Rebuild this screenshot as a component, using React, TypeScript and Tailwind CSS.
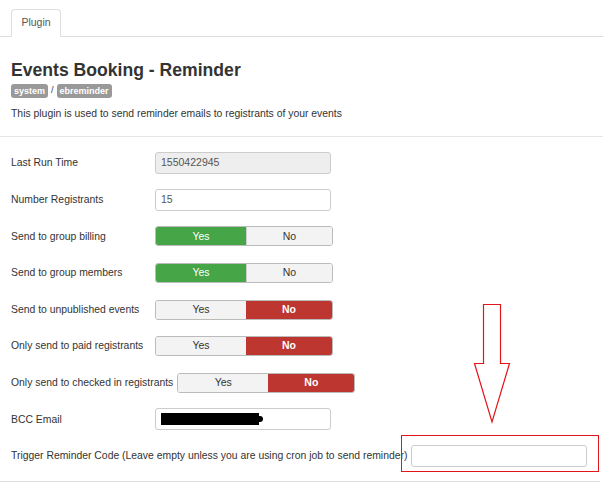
import React from "react";

type Row =
  | { label: string; kind: "input"; value?: string; disabled?: boolean; redacted?: boolean }
  | { label: string; kind: "toggle"; yes: boolean };

const rows: Row[] = [
  { label: "Last Run Time", kind: "input", value: "1550422945", disabled: true },
  { label: "Number Registrants", kind: "input", value: "15" },
  { label: "Send to group billing", kind: "toggle", yes: true },
  { label: "Send to group members", kind: "toggle", yes: true },
  { label: "Send to unpublished events", kind: "toggle", yes: false },
  { label: "Only send to paid registrants", kind: "toggle", yes: false },
  { label: "Only send to checked in registrants", kind: "toggle", yes: false },
  { label: "BCC Email", kind: "input", redacted: true },
];

function Toggle({ yes }: { yes: boolean }) {
  return (
    <div className="flex h-[20px] w-[178px] overflow-hidden rounded-[3px] border border-[#bbb] text-[10.5px]">
      <div
        className={
          yes
            ? "flex w-[90px] items-center justify-center bg-[#46a546] text-white"
            : "flex w-[90px] items-center justify-center bg-[#f3f3f3] text-[#333]"
        }
      >
        Yes
      </div>
      <div
        className={
          yes
            ? "flex flex-1 items-center justify-center border-l border-[#ccc] bg-[#f3f3f3] text-[#333]"
            : "flex flex-1 items-center justify-center bg-[#bd362f] font-bold text-white"
        }
      >
        No
      </div>
    </div>
  );
}

function TextInput({ value, disabled, redacted }: { value?: string; disabled?: boolean; redacted?: boolean }) {
  return (
    <div
      className={
        "flex h-[22px] w-[176px] items-center rounded-[3px] border border-[#ccc] px-[5px] text-[10.5px] text-[#555] " +
        (disabled ? "bg-[#eee]" : "bg-white")
      }
    >
      {redacted ? (
        <div className="flex items-center">
          <div className="h-[12px] w-[98px] bg-black" />
          <div className="h-[6px] w-[4px] rounded-r-full bg-black" />
        </div>
      ) : (
        value
      )}
    </div>
  );
}

export default function App() {
  return (
    <div className="relative h-[483px] w-[603px] overflow-hidden bg-white font-['Liberation_Sans',Arial,sans-serif] text-[#333]">
      <div className="mt-[9px] flex border-b border-[#ddd] pl-[11px]">
        <div className="-mb-px flex h-[28px] w-[50px] items-center justify-center rounded-t-[4px] border border-b-white border-[#ddd] bg-white text-[10.5px] text-[#555]">
          Plugin
        </div>
      </div>

      <div className="px-[11px]">
        <h1 className="mt-[22px] text-[17.6px] leading-[22px] font-bold text-[#333]">Events Booking - Reminder</h1>
        <div className="mt-[3px] flex items-center gap-[3px] text-[9px]">
          <span className="rounded-[3px] bg-[#999] px-[3px] leading-[14px] font-bold text-white">system</span>
          <span className="text-[#333]">/</span>
          <span className="rounded-[3px] bg-[#999] px-[3px] leading-[14px] font-bold text-white">ebreminder</span>
        </div>
        <p className="mt-[9px] text-[10.4px] leading-[14px]">This plugin is used to send reminder emails to registrants of your events</p>
      </div>

      <div className="mt-[15px] border-t border-[#e5e5e5]" />

      <div className="mt-[8px] flex flex-col px-[11px]">
        {rows.map((row) => (
          <div key={row.label} className="flex h-[36.6px] items-center">
            <div className="mr-[4px] min-w-[140px] whitespace-nowrap text-[10.4px]">{row.label}</div>
            {row.kind === "toggle" ? (
              <Toggle yes={row.yes} />
            ) : (
              <TextInput value={row.value} disabled={row.disabled} redacted={row.redacted} />
            )}
          </div>
        ))}
        <div className="flex h-[36.6px] items-center">
          <div className="mr-[4px] whitespace-nowrap text-[10.4px]">
            Trigger Reminder Code (Leave empty unless you are using cron job to send reminder)
          </div>
          <TextInput />
        </div>
      </div>

      <div className="absolute bottom-[1px] left-0 w-[600px] border-t border-[#ddd]" />

      {/* annotation overlay */}
      <div className="absolute left-[401px] top-[435px] h-[37px] w-[198px] border border-[#e4141b]" />
      <svg className="absolute left-[470px] top-[300px]" width="46" height="126" viewBox="0 0 46 126">
        <path
          d="M13.5 4.5 H30.5 V63.5 H39.5 L22 122 L4.5 63.5 H13.5 Z"
          fill="none"
          stroke="#e4141b"
          strokeWidth="1.2"
        />
      </svg>
    </div>
  );
}
